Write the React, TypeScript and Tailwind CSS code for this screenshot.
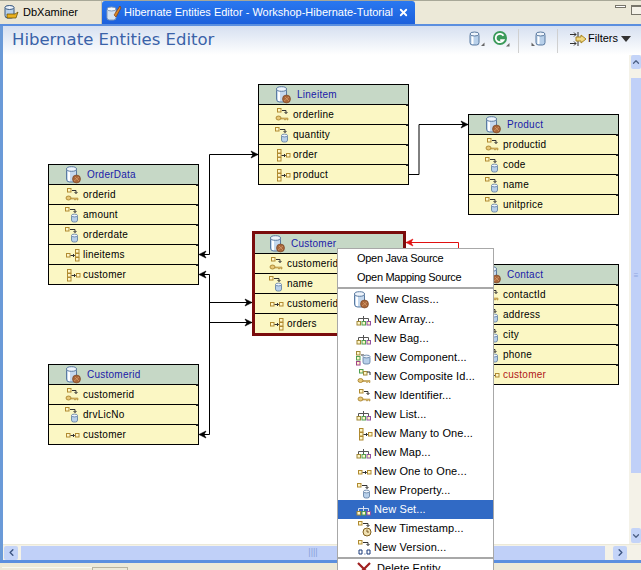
import { ChevronDown, ChevronLeft, ChevronRight, ChevronUp, X } from "lucide-react";

type IconKind =
  | "key"
  | "prop"
  | "m2o"
  | "o2m"
  | "o2o"
  | "tree"
  | "component"
  | "composite"
  | "time"
  | "version"
  | "entity"
  | "set"
  | "del";

type Row = { name: string; icon: IconKind; red?: boolean };

type EntityNode = {
  name: string;
  x: number;
  y: number;
  selected?: boolean;
  rows: Row[];
};

const nodes: EntityNode[] = [
  {
    name: "Lineitem",
    x: 258,
    y: 84,
    rows: [
      { name: "orderline", icon: "key" },
      { name: "quantity", icon: "prop" },
      { name: "order", icon: "m2o" },
      { name: "product", icon: "m2o" },
    ],
  },
  {
    name: "Product",
    x: 468,
    y: 114,
    rows: [
      { name: "productid", icon: "key" },
      { name: "code", icon: "prop" },
      { name: "name", icon: "prop" },
      { name: "unitprice", icon: "prop" },
    ],
  },
  {
    name: "OrderData",
    x: 48,
    y: 164,
    rows: [
      { name: "orderid", icon: "key" },
      { name: "amount", icon: "prop" },
      { name: "orderdate", icon: "prop" },
      { name: "lineitems", icon: "o2m" },
      { name: "customer", icon: "m2o" },
    ],
  },
  {
    name: "Customer",
    x: 252,
    y: 231,
    selected: true,
    rows: [
      { name: "customerid", icon: "key" },
      { name: "name", icon: "prop" },
      { name: "customerid", icon: "o2o" },
      { name: "orders", icon: "o2m" },
    ],
  },
  {
    name: "Contact",
    x: 468,
    y: 264,
    rows: [
      { name: "contactId", icon: "key" },
      { name: "address", icon: "prop" },
      { name: "city", icon: "prop" },
      { name: "phone", icon: "prop" },
      { name: "customer", icon: "o2o", red: true },
    ],
  },
  {
    name: "Customerid",
    x: 48,
    y: 364,
    rows: [
      { name: "customerid", icon: "key" },
      { name: "drvLicNo", icon: "prop" },
      { name: "customer", icon: "o2o" },
    ],
  },
];

const menuTop = [
  { label: "New Class...", icon: "entity" as IconKind, tall: true },
  { label: "New Array...", icon: "tree" as IconKind },
  { label: "New Bag...", icon: "tree" as IconKind },
  { label: "New Component...", icon: "component" as IconKind },
  { label: "New Composite Id...", icon: "composite" as IconKind },
  { label: "New Identifier...", icon: "key" as IconKind },
  { label: "New List...", icon: "tree" as IconKind },
  { label: "New Many to One...", icon: "m2o" as IconKind },
  { label: "New Map...", icon: "tree" as IconKind },
  { label: "New One to One...", icon: "o2o" as IconKind },
  { label: "New Property...", icon: "prop" as IconKind },
  { label: "New Set...", icon: "set" as IconKind, active: true },
  { label: "New Timestamp...", icon: "time" as IconKind },
  { label: "New Version...", icon: "version" as IconKind },
];

function Sq({ x, y, c = "#b08a30" }: { x: number; y: number; c?: string }) {
  return <rect x={x} y={y} width="3.5" height="3.5" fill="#fff6c8" stroke={c} strokeWidth="1" />;
}

function Arrow({ x, y }: { x: number; y: number }) {
  return <path d={`M${x} ${y}h4m-1.5-1.5l1.5 1.5l-1.5 1.5`} fill="none" stroke="#333" strokeWidth="1" />;
}

function Cyl({ x, y, w = 6, h = 7 }: { x: number; y: number; w?: number; h?: number }) {
  return (
    <g>
      <rect x={x} y={y + 1} width={w} height={h} rx="2" fill="#b8d0ea" stroke="#5a7aa0" strokeWidth="0.8" />
      <ellipse cx={x + w / 2} cy={y + 1.5} rx={w / 2} ry="1.4" fill="#eef4fb" stroke="#5a7aa0" strokeWidth="0.8" />
    </g>
  );
}

function KeyGlyph({ x, y }: { x: number; y: number }) {
  return (
    <g>
      <ellipse cx={x + 2.5} cy={y + 2.5} rx="2.5" ry="2" fill="#e8c878" stroke="#a07820" strokeWidth="0.8" />
      <path d={`M${x + 5} ${y + 2.5}h7v2h-1v-1h-1.5v1h-1v-1h-3.5z`} fill="#e8c878" stroke="#a07820" strokeWidth="0.5" />
    </g>
  );
}

function Icon({ kind }: { kind: IconKind }) {
  if (kind === "entity") {
    return (
      <svg width="15" height="18" viewBox="0 0 15 18" className="shrink-0">
        <rect x="0.5" y="2" width="10" height="14" rx="3" fill="#c4d8ee" stroke="#5a7aa0" />
        <rect x="2" y="4" width="2" height="11" fill="#fff" />
        <ellipse cx="5.5" cy="3" rx="5" ry="2.3" fill="#eef4fb" stroke="#5a7aa0" />
        <circle cx="10.5" cy="13" r="4" fill="#a8663a" stroke="#704020" strokeWidth="0.6" />
        <path d="M8 15l5-4M9 11l4 4" stroke="#d8a070" strokeWidth="0.7" />
      </svg>
    );
  }
  if (kind === "del") {
    return (
      <svg width="16" height="14" viewBox="0 0 16 14" className="shrink-0">
        <path d="M2 1l12 12M14 1L2 13" stroke="#a02020" strokeWidth="2.2" />
      </svg>
    );
  }
  return (
    <svg width="19" height="18" viewBox="0 0 19 18" className="shrink-0">
      {kind === "key" && (
        <g>
          <Sq x={5.5} y={2.5} />
          <path d="M10 4.5h4v3m-1.5-1.5l1.5 1.5l1.5-1.5" fill="none" stroke="#333" />
          <KeyGlyph x={4} y={9.5} />
        </g>
      )}
      {kind === "prop" && (
        <g>
          <Sq x={3.5} y={1.5} />
          <path d="M8 3.5h5v3m-1.5-1.5l1.5 1.5l1.5-1.5" fill="none" stroke="#333" />
          <Cyl x={9.5} y={8} />
        </g>
      )}
      {kind === "m2o" && (
        <g>
          <Sq x={5.5} y={3.5} />
          <Sq x={5.5} y={7.5} />
          <Sq x={5.5} y={11.5} />
          <Arrow x={9.5} y={9.5} />
          <Sq x={14.5} y={7.5} />
        </g>
      )}
      {kind === "o2m" && (
        <g>
          <Sq x={4.5} y={7.5} />
          <Arrow x={8.5} y={9.5} />
          <Sq x={13.5} y={3.5} />
          <Sq x={13.5} y={7.5} />
          <Sq x={13.5} y={11.5} />
        </g>
      )}
      {kind === "o2o" && (
        <g>
          <Sq x={4.5} y={7.5} />
          <Arrow x={8.5} y={9.5} />
          <Sq x={13.5} y={7.5} />
        </g>
      )}
      {(kind === "tree" || kind === "set") && (
        <g>
          <path d="M4.5 10V7.5h10V10M9.5 10V5" fill="none" stroke={kind === "set" ? "#d8e0f0" : "#555"} />
          <Sq x={3} y={10.5} c="#a08838" />
          <Sq x={8} y={10.5} c="#50a050" />
          <Sq x={13} y={10.5} c="#9050a0" />
        </g>
      )}
      {kind === "component" && (
        <g>
          <Sq x={2.5} y={2.5} c="#a08838" />
          <Sq x={2.5} y={7.5} c="#50a050" />
          <Sq x={2.5} y={12.5} c="#a0408a" />
          <path d="M7 6h3" stroke="#333" />
          <Cyl x={9} y={6} w={7} h={8} />
        </g>
      )}
      {kind === "composite" && (
        <g>
          <Sq x={5.5} y={1.5} c="#50a050" />
          <Sq x={9.5} y={3.5} c="#a08838" />
          <path d="M13 4h3v3" fill="none" stroke="#333" />
          <KeyGlyph x={4} y={10} />
        </g>
      )}
      {kind === "time" && (
        <g>
          <Sq x={4.5} y={1.5} />
          <path d="M9 3.5h5v3m-1.5-1.5l1.5 1.5l1.5-1.5" fill="none" stroke="#333" />
          <circle cx="13" cy="12" r="4" fill="#f0e0b0" stroke="#806020" />
          <path d="M13 9.5V12h2" fill="none" stroke="#604010" strokeWidth="0.8" />
        </g>
      )}
      {kind === "version" && (
        <g>
          <Sq x={4.5} y={1.5} />
          <path d="M9 3.5h5v3m-1.5-1.5l1.5 1.5l1.5-1.5" fill="none" stroke="#333" />
          <path d="M5 11h3v4H5zM13 11h3v4h-3zM10.5 15h.8" fill="none" stroke="#1a3a7a" />
        </g>
      )}
    </svg>
  );
}

function Node({ node }: { node: EntityNode }) {
  return (
    <div
      className={`absolute flex flex-col bg-[#fbf7c4] text-[10px] leading-none tracking-[0.25px] text-black ${
        node.selected ? "w-[154px] border-[3px] border-[#7a0c0c]" : "w-[151px] border border-black"
      }`}
      style={{ left: node.x - 3, top: node.y - 60 }}
    >
      <div
        className={`flex h-[19px] items-center gap-[5px] bg-[#c6d8c6] text-[#1a1aa8] ${
          node.selected ? "pl-[15px]" : "pl-[17px]"
        }`}
      >
        <Icon kind="entity" />
        <span className="pl-px">{node.name}</span>
      </div>
      {node.rows.map((row, i) => (
        <div
          key={row.name + i}
          className={`relative flex h-[20px] items-center border-t border-black ${
            node.selected ? "pl-[11px]" : "pl-[13px]"
          } ${row.red ? "text-[#b01818]" : ""}`}
        >
          <Icon kind={row.icon} />
          <span className="pl-[2px]">{row.name}</span>
          <span className="absolute -top-px right-0 h-[2px] w-[2px] bg-[#222]" />
        </div>
      ))}
    </div>
  );
}

function Arrowhead({ x, y, dir, color = "#000" }: { x: number; y: number; dir: 1 | -1; color?: string }) {
  return (
    <path
      d={`M${x} ${y}l${-7 * dir} -3.5l${2 * dir} 3.5l${-2 * dir} 3.5z`}
      fill={color}
      stroke={color}
      strokeWidth="0.6"
    />
  );
}

function Connectors() {
  return (
    <svg className="absolute left-[-3px] top-[-60px]" width="641" height="570" fill="none">
      <g stroke="#000" strokeWidth="1">
        <path d="M199.5 254.5h10V154.5H258" />
        <path d="M199.5 274.5h10V434.5H199.5" />
        <path d="M209.5 302.5H252M209.5 322.5H252" />
        <path d="M409 174.5h10V124.5H468" />
      </g>
      <path d="M406 242.5h52.5V264" stroke="#e01010" />
      <g>
        <Arrowhead x={199} y={254.5} dir={-1} />
        <Arrowhead x={199} y={274.5} dir={-1} />
        <Arrowhead x={199} y={434.5} dir={-1} />
        <Arrowhead x={258} y={154.5} dir={1} />
        <Arrowhead x={252} y={302.5} dir={1} />
        <Arrowhead x={252} y={322.5} dir={1} />
        <Arrowhead x={468} y={124.5} dir={1} />
        <Arrowhead x={406} y={242.5} dir={-1} color="#e01010" />
      </g>
    </svg>
  );
}

function ContextMenu() {
  return (
    <div className="absolute left-[337px] top-[248px] w-[157px] border border-[#a8a8a8] bg-white text-[11px] tracking-[0.1px] text-black">
      <div className="flex h-[19px] items-center pl-[19px] tracking-[-0.3px]">Open Java Source</div>
      <div className="flex h-[19px] items-center pl-[19px] tracking-[-0.3px]">Open Mapping Source</div>
      <div className="h-[2px] bg-[#a8a8a8]" />
      {menuTop.map((item) => (
        <div
          key={item.label}
          className={`flex items-center pl-[16px] ${item.tall ? "h-[21px]" : "h-[19px]"} ${
            item.active ? "bg-[#316ac5] text-white" : ""
          }`}
        >
          <Icon kind={item.icon} />
          <span className={item.tall ? "pl-[7px]" : "pl-[1px]"}>{item.label}</span>
        </div>
      ))}
      <div className="h-[2px] bg-[#a8a8a8]" />
      <div className="flex h-[19px] items-center pl-[18px]">
        <Icon kind="del" />
        <span className="pl-[5px]">Delete Entity</span>
      </div>
    </div>
  );
}

function HeaderToolbar() {
  return (
    <div className="flex items-center pr-[10px]">
      <svg width="17" height="16" viewBox="0 0 17 16" className="-mt-[4px]">
        <rect x="1" y="2" width="9" height="12" rx="2.5" fill="#b8d0ea" stroke="#5a7aa0" />
        <rect x="2.5" y="4" width="2" height="9" fill="#fff" />
        <ellipse cx="5.5" cy="3" rx="4.5" ry="2" fill="#eef4fb" stroke="#5a7aa0" />
        <path d="M12 15h3.5v-3.5z" fill="#666" />
      </svg>
      <svg width="18" height="16" viewBox="0 0 18 16" className="ml-[6px] -mt-[4px]">
        <circle cx="8" cy="7" r="7" fill="#3a9a5a" />
        <path d="M11.5 4.8A4.2 4.2 0 1 0 11.5 9.2H8.2" fill="none" stroke="#fff" strokeWidth="1.8" />
        <path d="M14 15.5h3.5V12z" fill="#666" />
      </svg>
      <div className="ml-[8px] h-[24px] w-px bg-[#d0d0d0]" />
      <svg width="17" height="16" viewBox="0 0 17 16" className="ml-[11px] -mt-[4px]">
        <path d="M1 15h3.5v-3.5z" fill="#666" transform="matrix(-1 0 0 1 6 0)" />
        <rect x="6" y="2" width="9" height="12" rx="2.5" fill="#b8d0ea" stroke="#5a7aa0" />
        <rect x="7.5" y="4" width="2" height="9" fill="#fff" />
        <ellipse cx="10.5" cy="3" rx="4.5" ry="2" fill="#eef4fb" stroke="#5a7aa0" />
      </svg>
      <div className="ml-[10px] h-[24px] w-px bg-[#d0d0d0]" />
      <svg width="18" height="16" viewBox="0 0 18 16" className="ml-[11px] -mt-[4px]">
        <path d="M1 3.5h6m-2-2l2 2l-2 2M1 12.5h6m-2-2l2 2l-2 2M9 1v14" fill="none" stroke="#333" />
        <path d="M7 6h5V4l5 4l-5 4v-2H7z" fill="#f0d880" stroke="#a88420" />
      </svg>
      <span className="ml-px -mt-[4px] text-[11px] text-black">Filters</span>
      <svg width="10" height="6" viewBox="0 0 10 6" className="ml-[3px] -mt-[4px]">
        <path d="M0 0h10L5 6z" fill="#333" />
      </svg>
    </div>
  );
}

export default function App() {
  return (
    <div className="relative flex h-[570px] w-[641px] flex-col overflow-hidden bg-[#ece9d8] font-['Liberation_Sans',sans-serif]">
      {/* Tabs */}
      <div className="flex h-[24px] shrink-0 items-end border-t border-[#a8a898] bg-[#ece9d8]">
        <div className="flex h-[23px] w-[102px] items-center gap-[3px] rounded-tl-[3px] border-r border-[#c8c4b0] bg-[#ebe6d4] pl-[4px] text-[11px] text-black">
          <svg width="16" height="16" viewBox="0 0 16 16">
            <rect x="1" y="1" width="9" height="12" rx="2.5" fill="#b8d0ea" stroke="#3a5a80" />
            <ellipse cx="5.5" cy="2.5" rx="4.5" ry="2" fill="#eef4fb" stroke="#3a5a80" />
            <path d="M3 9h8l3-2-2 6H3z" fill="#e8b020" stroke="#604800" strokeWidth="0.7" />
          </svg>
          <span>DbXaminer</span>
        </div>
        <div className="flex h-[23px] w-[313px] items-center rounded-t-[3px] bg-gradient-to-b from-[#2a78f0] to-[#1c60dc] pl-[4px] pr-[6px] text-[11px] text-white">
          <svg width="16" height="16" viewBox="0 0 16 16" className="mr-[2px] shrink-0">
            <rect x="1" y="3" width="9" height="12" rx="2.5" fill="#d4e2f2" stroke="#8098b8" />
            <ellipse cx="5.5" cy="4" rx="4.5" ry="2" fill="#f4f8fc" stroke="#8098b8" />
            <path d="M14 1L8 10l2 2 5-9z" fill="#d8882a" stroke="#803000" strokeWidth="0.6" />
          </svg>
          <span className="flex-1 whitespace-nowrap">Hibernate Entities Editor - Workshop-Hibernate-Tutorial</span>
          <X size={11} strokeWidth={4} className="shrink-0" />
        </div>
        <div className="flex flex-1 items-start justify-end gap-[5px] self-start pt-[4px]">
          <div className="h-[3px] w-[11px] border border-[#77756a] bg-white" />
          <div className="h-[10px] w-[10px] border border-[#77756a] border-t-2 border-r-0 bg-[#f4f2e8]" />
        </div>
      </div>
      <div className="h-[2px] shrink-0 bg-[#5b8fdf]" />

      {/* Editor */}
      <div className="flex flex-1 flex-col border-l-[3px] border-[#6a9ad8] bg-white">
        <div className="flex h-[29px] shrink-0 items-center justify-between bg-gradient-to-b from-[#d6e0f0] to-white pl-[9px]">
          <h1 className="font-['DejaVu_Sans',sans-serif] text-[16.5px] leading-none text-[#3a62a8]">
            Hibernate Entities Editor
          </h1>
          <HeaderToolbar />
        </div>

        <div className="flex min-h-0 flex-1 justify-end">
          {/* vertical scrollbar */}
          <div className="flex w-[12px] shrink-0 flex-col items-end bg-[#f4f2e8]">
            <div className="flex h-[14px] w-[10px] items-center justify-center rounded-[2px] bg-[#c4d4f8] text-[#4d6185]">
              <ChevronUp size={10} strokeWidth={3} />
            </div>
            <div className="mt-[9px] flex h-[395px] w-[10px] items-center justify-center bg-[#c0d0f8] text-[8px] leading-none text-[#90a8e0]">
              ≡
            </div>
            <div className="mt-[55px] flex h-[15px] w-[10px] items-center justify-center rounded-[2px] bg-[#c4d4f8] text-[#4d6185]">
              <ChevronDown size={10} strokeWidth={3} />
            </div>
          </div>
        </div>

        {/* horizontal scrollbar */}
        <div className="flex h-[16px] shrink-0 items-center border-t border-[#ece9d8] bg-[#f4f2e8] pl-px">
          <div className="flex h-[14px] w-[14px] items-center justify-center rounded-[2px] bg-[#c4d4f8] text-[#3d5580]">
            <ChevronLeft size={11} strokeWidth={3} />
          </div>
          <div className="ml-[3px] flex h-[14px] w-[584px] items-center justify-center bg-[#c0d0f8] text-[9px] leading-none text-[#8aa2d8]">
            ||||
          </div>
          <div className="ml-[8px] flex h-[14px] w-[14px] items-center justify-center rounded-[2px] bg-[#c4d4f8] text-[#3d5580]">
            <ChevronRight size={11} strokeWidth={3} />
          </div>
        </div>
      </div>
      <div className="h-[3px] shrink-0 bg-[#5b8fdf]" />

      {/* Bottom view tabs */}
      <div className="flex h-[7px] shrink-0 items-end bg-[#ece9d8] pl-[2px]">
        <div className="h-[3px] w-[90px] border-t border-[#f8f8f0]" />
        <div className="h-[3px] w-[35px] border-l border-t border-[#b8b4a0]" />
        <div className="h-[3px] flex-1 border-l border-[#b8b4a0]" />
      </div>

      {/* Diagram layer */}
      <div className="absolute left-[3px] top-[60px] h-[484px] w-[626px]">
        <Connectors />
        {nodes.map((node) => (
          <Node key={node.name} node={node} />
        ))}
      </div>

      <ContextMenu />
    </div>
  );
}
